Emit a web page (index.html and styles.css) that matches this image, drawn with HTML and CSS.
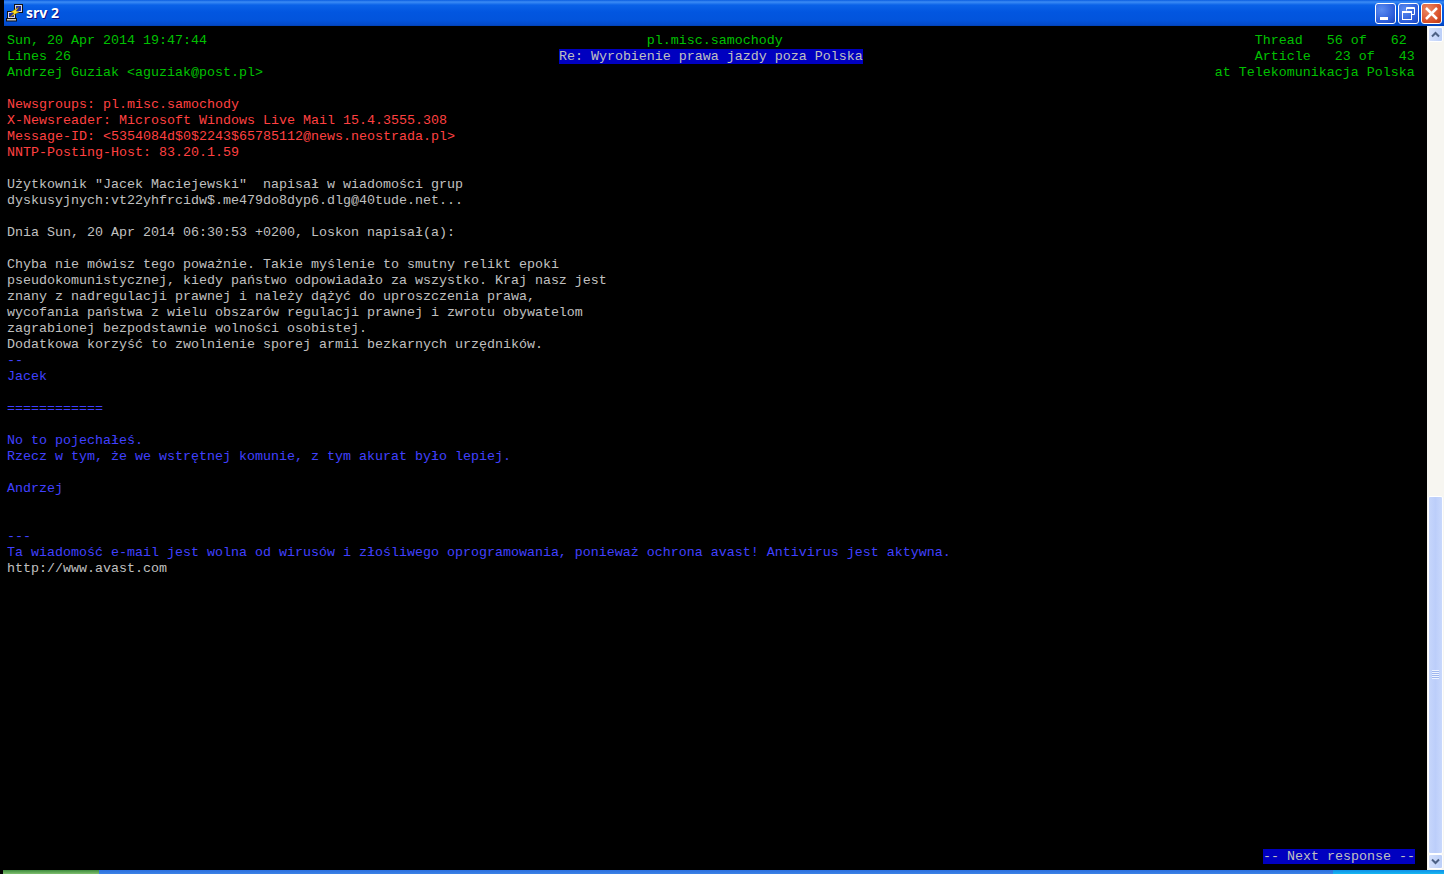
FILE: index.html
```html
<!DOCTYPE html>
<html lang="pl">
<head>
<meta charset="utf-8">
<title>srv 2</title>
<link rel="stylesheet" href="styles.css">
</head>
<body>
<div class="window">
  <header class="titlebar">
    <div class="title">
      <svg class="app-icon" width="18" height="18" viewBox="0 0 18 18">
        <rect x="8.500" y="0.500" width="8" height="8" fill="#d8d8e8" stroke="#111"/>
        <rect x="10" y="2" width="5" height="5" fill="#2030a0"/>
        <rect x="1.500" y="7.500" width="8" height="7" fill="#d8d8e8" stroke="#111"/>
        <rect x="3" y="9" width="5" height="4" fill="#2030a0"/>
        <rect x="0.500" y="14.500" width="10" height="2.500" fill="#c8c8c8" stroke="#111"/>
        <path d="M13 3 L5 8 L8 9 L4 13 L13 8 L10 7 Z" fill="#ffe020" stroke="#7a5c00" stroke-width=".5"/>
      </svg>
      <span class="title-text">srv 2</span>
    </div>
    <div class="controls">
      <div class="btn btn-blue">
        <svg width="21" height="21" viewBox="0 0 21 21"><rect x="5" y="14" width="8" height="3" fill="#fff"/></svg>
      </div>
      <div class="btn btn-blue">
        <svg width="21" height="21" viewBox="0 0 21 21" fill="none" stroke="#fff"><path d="M8.500 7.500V4.500H16.500V11.500H13.500"/><path d="M8.500 5.500H16.500"/><rect x="4.500" y="8.500" width="9" height="8"/><path d="M4.500 9.500H13.500"/></svg>
      </div>
      <div class="btn btn-red">
        <svg width="21" height="21" viewBox="0 0 21 21" fill="none" stroke="#fff" stroke-width="2.500"><path d="M5 5L16 16M16 5L5 16"/></svg>
      </div>
    </div>
  </header>
  <div class="body">
<pre class="terminal"><span class="g">Sun, 20 Apr 2014 19:47:44                                                       pl.misc.samochody                                                           Thread   56 of   62</span>
<span class="g">Lines 26</span>                                                             <span class="hl">Re: Wyrobienie prawa jazdy poza Polska</span>                                                 <span class="g">Article   23 of   43</span>
<span class="g">Andrzej Guziak &lt;aguziak@post.pl&gt;                                                                                                                       at Telekomunikacja Polska</span>

<span class="r">Newsgroups: pl.misc.samochody
X-Newsreader: Microsoft Windows Live Mail 15.4.3555.308
Message-ID: &lt;5354084d$0$2243$65785112@news.neostrada.pl&gt;
NNTP-Posting-Host: 83.20.1.59</span>

Użytkownik "Jacek Maciejewski"  napisał w wiadomości grup
dyskusyjnych:vt22yhfrcidw$.me479do8dyp6.dlg@40tude.net...

Dnia Sun, 20 Apr 2014 06:30:53 +0200, Loskon napisał(a):

Chyba nie mówisz tego poważnie. Takie myślenie to smutny relikt epoki
pseudokomunistycznej, kiedy państwo odpowiadało za wszystko. Kraj nasz jest
znany z nadregulacji prawnej i należy dążyć do uproszczenia prawa,
wycofania państwa z wielu obszarów regulacji prawnej i zwrotu obywatelom
zagrabionej bezpodstawnie wolności osobistej.
Dodatkowa korzyść to zwolnienie sporej armii bezkarnych urzędników.
<span class="b">--
Jacek

============

No to pojechałeś.
Rzecz w tym, że we wstrętnej komunie, z tym akurat było lepiej.

Andrzej


---
Ta wiadomość e-mail jest wolna od wirusów i złośliwego oprogramowania, ponieważ ochrona avast! Antivirus jest aktywna.</span>
http://www.avast.com</pre>
    <div class="status"><span class="hl">-- Next response --</span></div>
    <aside class="scrollbar">
      <div class="arrow"><svg width="15" height="15" viewBox="0 0 15 15" fill="none" stroke="#4d6185" stroke-width="2"><path d="M4 9.500L7.500 6L11 9.500"/></svg></div>
      <div class="track">
        <div class="thumb"><span class="grip"></span></div>
      </div>
      <div class="arrow"><svg width="15" height="15" viewBox="0 0 15 15" fill="none" stroke="#4d6185" stroke-width="2"><path d="M4 5.500L7.500 9L11 5.500"/></svg></div>
    </aside>
  </div>
  <footer class="taskbar">
    <div class="start"></div>
    <div class="tasks"></div>
    <div class="tray"></div>
  </footer>
</div>
</body>
</html>
```

FILE: styles.css
```css
* { box-sizing: border-box; }
html, body { margin: 0; height: 100%; overflow: hidden; background: #000; }
.window { width: 1444px; height: 874px; display: flex; flex-direction: column; }

.titlebar {
  height: 26px;
  flex: none;
  display: flex;
  justify-content: space-between;
  align-items: center;
  margin-left: 4px;
  padding: 0 2px 0 2px;
  background: linear-gradient(#0a5de0 0, #3c8cf5 2px, #0a62e8 5px, #0256e0 12px, #0254dc 20px, #0349c8 25px, #003fb0 26px);
}
.title { display: flex; align-items: center; gap: 2px; }
.app-icon { display: block; margin-top: -1px; }
.title-text {
  font: bold 14px/1 "Open Sans", "Liberation Sans", Arial, sans-serif;
  color: #fff;
  text-shadow: 1px 1px 0 #0f1089;
}
.controls { display: flex; gap: 2px; }
.btn {
  width: 21px;
  height: 21px;
  border: 1px solid #fff;
  border-radius: 3px;
  overflow: hidden;
}
.btn svg { display: block; margin: -1px; }
.btn-blue { background: radial-gradient(circle at 30% 30%, #5b8cf0, #2a5ad8 70%, #1c46b8); }
.btn-red { background: radial-gradient(circle at 30% 30%, #eb8a66, #d9502a 65%, #b43a18); }

.body { flex: 1; min-height: 0; display: flex; position: relative; background: #000; }
.terminal {
  flex: 1;
  margin: 0;
  padding: 7px 0 0 7px;
  font: 13.33px/16px "Liberation Mono", "Courier New", monospace;
  color: #c0c0c0;
  overflow: hidden;
}
.g { color: #00c000; }
.r { color: #ff4040; }
.b { color: #4040ff; }
.hl { background: #0000c0; color: #c0c0c0; }
.status {
  position: absolute;
  right: 29px;
  top: 823px;
  font: 13.33px/16px "Liberation Mono", "Courier New", monospace;
  white-space: pre;
}

.scrollbar {
  width: 17px;
  flex: none;
  display: flex;
  flex-direction: column;
  background: #f7f6f1;
  padding: 1px 1px 1px 1px;
}
.arrow {
  height: 15px;
  flex: none;
  border: 1px solid #fff;
  border-radius: 2px;
  background: linear-gradient(90deg, #d4e0fc, #bccff8);
  display: flex;
}
.arrow svg { margin: -1px; }
.track { flex: 1; display: flex; flex-direction: column; justify-content: flex-end; }
.thumb {
  height: 358px;
  border: 1px solid #fff;
  border-radius: 2px;
  background: linear-gradient(90deg, #c6d6fb, #bccefa 50%, #c8d8fc);
  display: flex;
  justify-content: center;
  padding-top: 173px;
}
.grip {
  width: 7px;
  height: 9px;
  background: repeating-linear-gradient(#eef3ff 0 1px, #9fb6ee 1px 2px);
}

.taskbar { height: 4px; flex: none; display: flex; background: #000; }
.start { width: 96px; margin-left: 3px; background: linear-gradient(#3c8a3c, #7fbf6f); }
.tasks { flex: 1; background: linear-gradient(#2a6fe0, #3d83e6); }
.tray { width: 111px; background: linear-gradient(#0f8fe8, #18b8f0); }
```
